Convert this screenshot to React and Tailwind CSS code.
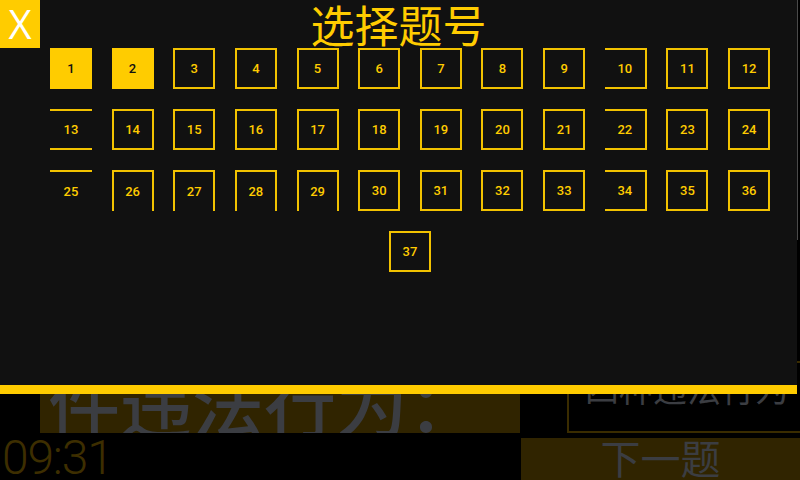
const total = 37;

// some boxes in the picture are drawn with missing edges
const edgeStyle = {
  10: 'border-t-2 border-r-2 border-b-2',
  22: 'border-t-2 border-r-2 border-b-2',
  34: 'border-t-2 border-r-2 border-b-2',
  13: 'border-t-2 border-b-2',
  25: 'border-t-2',
  26: 'border-t-2 border-l-2 border-r-2',
  27: 'border-t-2 border-l-2 border-r-2',
  28: 'border-t-2 border-l-2 border-r-2',
  29: 'border-t-2 border-l-2 border-r-2',
};

const done = [1, 2];

const NumberBox = ({ n }) => {
  const filled = done.includes(n);
  const edges = edgeStyle[n] || 'border-2';
  return (
    <div className="w-[61.66px] h-[61px] flex justify-center items-start">
      <div
        className={`w-[42px] h-[41px] flex items-center justify-center text-[13px] font-medium border-[#f2c200] ${
          filled ? 'bg-[#ffcc00] text-[#111111]' : `${edges} text-[#ffcc00]`
        }`}
        style={{ fontFamily: 'Roboto, "Liberation Sans", sans-serif' }}
      >
        {n}
      </div>
    </div>
  );
};

export default function App() {
  const cjk = { fontFamily: '"Noto Sans CJK SC", "Noto Sans", sans-serif' };
  const nums = Array.from({ length: total }, (_, i) => i + 1);

  return (
    <div className="relative w-[800px] h-[480px] overflow-hidden bg-black">
      {/* page behind the dialog */}
      <div className="flex flex-col h-full">
        <div className="flex-1 flex justify-end">
          <div className="w-px h-[240px] mr-[2px] bg-[#4a4a4a]"></div>
        </div>
        <div className="flex items-end h-[80px]">
          <div className="ml-10 w-[480px] h-full bg-[#302400] overflow-hidden flex items-end pl-[8px]">
            <span className="text-[72px] font-medium leading-none text-[#3b3d42] whitespace-nowrap mb-[-4px]" style={cjk}>
              件违法行为：
            </span>
          </div>
          <div className="ml-[47px] flex-1 h-[72px] border-2 border-r-0 border-[#3a2c00] pl-[16px] overflow-hidden">
            <span className="block text-[34px] leading-none text-[#3b3d42] whitespace-nowrap mt-[8px]" style={cjk}>
              四种违法行为
            </span>
          </div>
        </div>
        <div className="flex h-[47px]">
          <div
            className="w-[521px] pl-[2px] text-[48px] font-light leading-none text-[#3d2e00] tracking-tight pt-[1px]"
            style={{ fontFamily: 'Roboto, "Liberation Sans", sans-serif' }}
          >
            09:31
          </div>
          <div className="flex-1 mt-[5px] bg-[#302400] flex justify-center overflow-hidden">
            <span className="text-[40px] leading-none text-[#3b3d42] mt-[-1px]" style={cjk}>
              下一题
            </span>
          </div>
        </div>
      </div>

      {/* question picker dialog */}
      <div className="absolute left-0 top-0 w-[797px] h-[394px] bg-[#111111] border-b-[9px] border-[#ffcc00]">
        <div className="flex h-12">
          <div
            className="w-10 h-12 bg-[#ffcc00] text-white text-[40px] leading-none flex items-center justify-center"
            style={{ fontFamily: '"Open Sans", "Liberation Sans", sans-serif' }}
          >
            X
          </div>
          <div className="flex-1 flex items-center justify-center">
            <span className="text-[44px] leading-none text-[#ffcc00]" style={cjk}>
              选择题号
            </span>
          </div>
          <div className="w-10"></div>
        </div>
        <div className="ml-10 w-[740px] flex flex-wrap justify-center">
          {nums.map((n) => (
            <NumberBox key={n} n={n} />
          ))}
        </div>
      </div>
    </div>
  );
}
